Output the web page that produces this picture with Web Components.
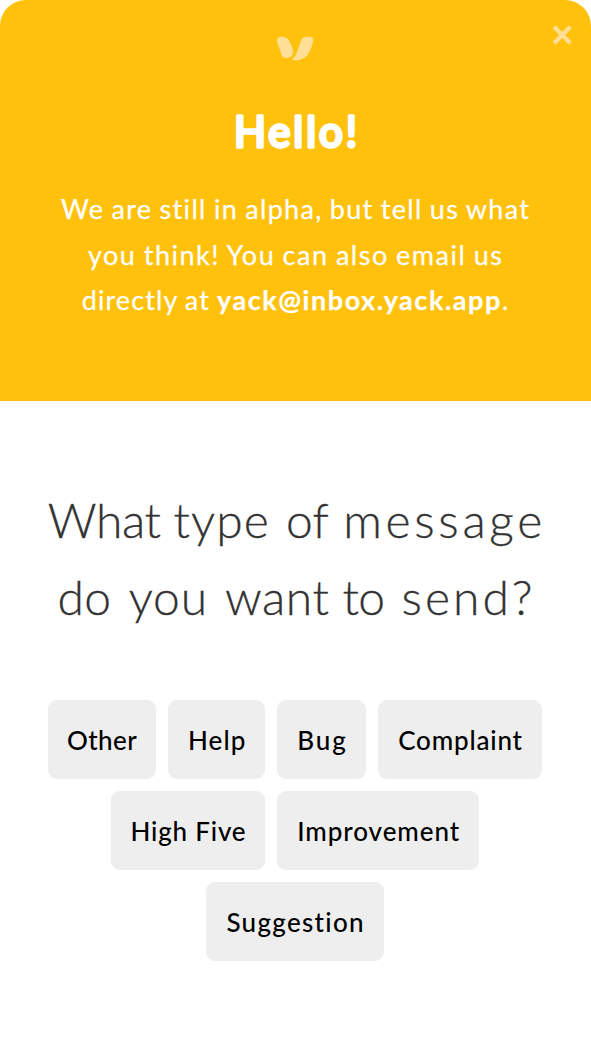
<!DOCTYPE html>
<html lang="en">
<head>
<meta charset="utf-8">
<title>Yack feedback</title>
<style>
  body { margin: 0; background: #fff; font-family: Lato, "Open Sans", sans-serif; }
</style>
</head>
<body>
<yack-widget>
  <yack-header slot="header">
    <text-line style="--tracking: 1.3px">We are still in alpha, but tell us what</text-line>
    <text-line style="--tracking: 1.5px">you think! You can also email us</text-line>
    <text-line style="--tracking: 1.1px">directly at <b style="letter-spacing: 1.55px">yack@inbox.yack.app</b>.</text-line>
  </yack-header>
  <yack-question>
    <text-line slot="title"><span style="letter-spacing: -.45px">What</span> <span style="letter-spacing: 1.1px; margin-right: 3px">type</span> <span style="letter-spacing: .2px; margin-right: 1px">of</span> <span style="letter-spacing: 3.7px; margin-right: -3.7px">message</span></text-line>
    <text-line slot="title"><span style="letter-spacing: .5px; margin-right: 4px">do</span> <span style="letter-spacing: .9px; margin-right: 4px">you</span> <span style="letter-spacing: .5px">want</span> <span style="letter-spacing: -.5px; margin-right: 4px">to</span> <span style="letter-spacing: 3px; margin-right: -3px">send?</span></text-line>
    <yack-option style="--w: 108.5px; --tracking: .4px">Other</yack-option>
    <yack-option style="--w: 97px; --tracking: 1.1px">Help</yack-option>
    <yack-option style="--w: 88.7px; --tracking: 1.9px">Bug</yack-option>
    <yack-option style="--w: 164.5px; --tracking: .82px">Complaint</yack-option>
    <yack-option style="--w: 154.4px; --tracking: .8px">High Five</yack-option>
    <yack-option style="--w: 201.8px; --tracking: .92px">Improvement</yack-option>
    <yack-option style="--w: 178px; --tracking: 1.3px">Suggestion</yack-option>
  </yack-question>
</yack-widget>

<script>
class Base extends HTMLElement {
  connectedCallback() {
    this.attachShadow({ mode: 'open' }).innerHTML = this.constructor.markup;
  }
}

customElements.define('yack-widget', class extends Base {
  static markup = `
    <style>
      :host { display: flex; flex-direction: column; height: 1063px; overflow: hidden; }
    </style>
    <slot name="header"></slot><slot></slot>`;
});

customElements.define('text-line', class extends Base {
  static markup = `
    <style>
      :host { display: block; white-space: nowrap; letter-spacing: var(--tracking, 0); }
      span { margin-right: calc(var(--tracking, 0px) * -1); }
    </style>
    <span><slot></slot></span>`;
});

customElements.define('yack-header', class extends Base {
  static markup = `
    <style>
      :host { display: flex; flex-direction: column; align-items: center; position: relative;
        box-sizing: border-box; height: 401px; flex: none; padding-top: 36px;
        border-radius: 26px 26px 0 0; background: #ffc10c; color: #fff; text-align: center; }
      .logo { display: block; width: 38px; height: 25px; margin-right: 1.6px; }
      .close { position: absolute; right: 18px; top: 24px; width: 21px; height: 21px;
        padding: 0; border: 0; background: none; }
      .close svg, h1 svg { display: block; }
      h1 { margin: 40px 0 25px; height: 60px; font-size: 42px; font-weight: 400; }
      .body { font-size: 27px; line-height: 45.6px; word-spacing: -1px; margin-right: 1px;
        -webkit-text-stroke: .25px #fff; }
    </style>
    <svg class="logo" viewBox="276 36 38 25" fill="#ffdf96">
      <path d="M277.2 42.3C276.1 38.6 278.4 36.7 281.8 36.7C285.4 36.7 288 38 289.8 42C291.4 45.4 293 48.6 293 51.6C293 55.4 290.4 58 286.8 58C283.8 58 282.5 57.6 281.7 55.2Z"/>
      <path d="M301 40.4C302.2 37.5 304 36.7 306.4 36.7H309.3C312.4 36.7 313.9 38.6 313.1 41.2C312 45.8 310.7 50.3 308.3 53.7C305 58.4 300.6 60.3 295.5 60.3C293.4 60.3 292 60.2 292 59.6C292 59.2 295.2 57 296.5 53.2Z"/>
    </svg>
    <button class="close" aria-label="Close">
      <svg width="21" height="21" viewBox="0 0 21 21" fill="none" stroke="#ffdf96" stroke-width="4.2">
        <path d="M2.1 2.7L18.3 19.3M18.3 2.7L2.1 19.3"/>
      </svg>
    </button>
    <h1>
      <svg width="140" height="60" viewBox="0 0 140 60">
        <text x="69.5" y="45.7" text-anchor="middle" textLength="123" lengthAdjust="spacing"
          fill="#fff" stroke="#fff" stroke-width="3.3" stroke-linejoin="round">Hello!</text>
      </svg>
    </h1>
    <div class="body"><slot></slot></div>`;
});

customElements.define('yack-question', class extends Base {
  static markup = `
    <style>
      :host { display: flex; flex-direction: column; padding: 80px 48px 0 47px; }
      h2 { margin: 0 -10px 65px; color: #333; font-size: 48px; line-height: 77px;
        font-weight: 300; text-align: center; -webkit-text-stroke: .3px #333; }
      .options { display: flex; flex-wrap: wrap; justify-content: center; gap: 12px; }
    </style>
    <h2><slot name="title"></slot></h2>
    <div class="options"><slot></slot></div>`;
});

customElements.define('yack-option', class extends Base {
  static markup = `
    <style>
      :host { display: block; width: var(--w); height: 79px; }
      button { display: flex; align-items: center; justify-content: center; width: 100%; height: 100%;
        padding: 0; border: 0; border-radius: 9px; background: #eee; color: #000;
        font: 500 26px Lato, "Open Sans", sans-serif; letter-spacing: var(--tracking);
        white-space: nowrap; }
      span { margin-right: calc(var(--tracking) * -1); }
    </style>
    <button><span><slot></slot></span></button>`;
});
</script>
</body>
</html>
